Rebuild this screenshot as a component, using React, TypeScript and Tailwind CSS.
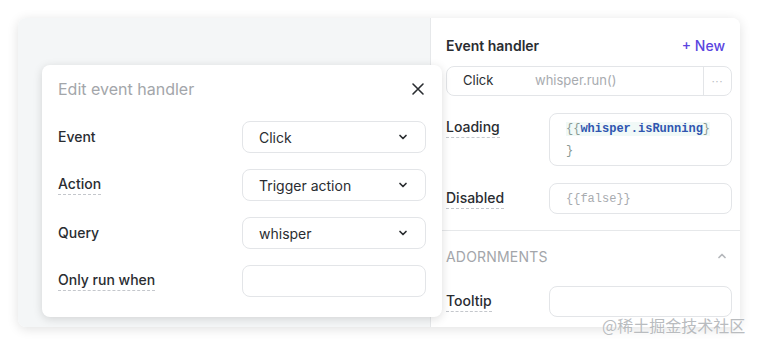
import React from 'react';

const font = { fontFamily: 'Inter, "Noto Sans", sans-serif' };
const mono = { fontFamily: '"Liberation Mono", "Courier New", monospace' };

const Chevron = ({ up = false }: { up?: boolean }) => (
  <svg width="12" height="12" viewBox="0 0 12 12" className={up ? 'rotate-180' : ''}>
    <path d="M3 4.5 L6 7.5 L9 4.5" fill="none" stroke="currentColor" strokeWidth="1.7" strokeLinecap="round" strokeLinejoin="round" />
  </svg>
);

const Label = ({ text, dashed = false }: { text: string; dashed?: boolean }) => (
  <span
    className={`inline-block leading-[18px] text-[14px] font-medium text-[#2a2d31] ${dashed ? 'border-b border-dashed border-[#c4c7cc] pb-[1px]' : ''}`}
  >
    {text}
  </span>
);

const SelectRow = ({ label, value, dashed, empty }: { label: string; value?: string; dashed?: boolean; empty?: boolean }) => (
  <div className="flex items-center h-[32px]">
    <div className="w-[184px] flex">
      <Label text={label} dashed={dashed} />
    </div>
    <div className="w-[184px] h-[32px] rounded-lg border border-[#e3e5e8] flex items-center justify-between px-[16px] text-[14px] text-[#2a2d31]">
      <span>{value}</span>
      {!empty && <span className="text-[#2a2d31]"><Chevron /></span>}
    </div>
  </div>
);

export default function App() {
  return (
    <div className="relative w-[758px] h-[346px] bg-white overflow-hidden" style={font}>
      {/* Card */}
      <div className="absolute left-[18px] top-[18px] w-[722px] h-[309px] rounded-lg overflow-hidden shadow-[0_2px_12px_rgba(0,0,0,0.12)] flex">
        <div className="w-[412px] h-full bg-[#f4f6f7]" />
        <div className="flex-1 bg-white border-l border-[#e6e8ea] flex flex-col">
          <div className="pl-[15px] pr-[8px]">
            <div className="flex items-center justify-between h-[48px] pt-[6px] pr-[7px]">
              <span className="text-[14px] font-semibold text-[#2a2d31]">Event handler</span>
              <span className="text-[14px] font-medium text-[#5a45e0]">+ New</span>
            </div>
            <div className="h-[30px] rounded-lg border border-[#e3e5e8] flex items-center text-[13px]">
              <span className="pl-[16px] w-[88px] text-[#2a2d31]">Click</span>
              <span className="flex-1 text-[#a8abaf]">whisper.run()</span>
              <span className="w-[28px] h-full border-l border-[#e3e5e8] flex items-center justify-center text-[#b5b8bc] text-[10px] tracking-[1px]">···</span>
            </div>
            <div className="flex mt-[17px]">
              <div className="w-[103px] pt-[5px] flex items-start"><Label text="Loading" dashed /></div>
              <div className="flex-1 h-[53px] rounded-lg border border-[#e3e5e8] pl-[16px] pt-[4px] text-[12px] leading-[22px]" style={mono}>
                <div>
                  <span className="bg-[#f1f9f7] text-[#8a9a94]">
                    {'{{'}<span className="text-[#2f56b0] font-semibold">whisper.isRunning</span>{'}'}
                  </span>
                </div>
                <div className="text-[#8a9a94]">{'}'}</div>
              </div>
            </div>
            <div className="flex items-center mt-[17px]">
              <div className="w-[103px] flex"><Label text="Disabled" dashed /></div>
              <div className="flex-1 h-[31px] rounded-lg border border-[#e3e5e8] pl-[16px] flex items-center text-[12px] text-[#a8abaf]" style={mono}>
                {'{{false}}'}
              </div>
            </div>
          </div>
          <div className="border-t border-[#e6e8ea] mt-[16px]" />
          <div className="pl-[15px] pr-[8px]">
            <div className="flex items-center justify-between h-[48px] pt-[2px] pr-[4px]">
              <span className="text-[14px] text-[#a3a6aa] tracking-[0.2px]">ADORNMENTS</span>
              <span className="text-[#b5b8bc]"><Chevron up /></span>
            </div>
            <div className="flex items-center mt-[7px]">
              <div className="w-[103px] flex"><Label text="Tooltip" dashed /></div>
              <div className="flex-1 h-[31px] rounded-lg border border-[#e3e5e8]" />
            </div>
          </div>
        </div>
      </div>

      {/* Modal */}
      <div className="absolute left-[42px] top-[65px] w-[400px] h-[252px] bg-white rounded-lg shadow-[0_2px_10px_rgba(0,0,0,0.14)] px-[16px]">
        <div className="flex items-center justify-between h-[48px]">
          <span className="text-[16px] text-[#a3a6aa]">Edit event handler</span>
          <svg width="14" height="14" viewBox="0 0 14 14" className="mr-[1px]">
            <path d="M2 2 L12 12 M12 2 L2 12" stroke="#2a2d31" strokeWidth="1.6" strokeLinecap="round" />
          </svg>
        </div>
        <div className="flex flex-col gap-[16px] mt-[8px]">
          <SelectRow label="Event" value="Click" />
          <SelectRow label="Action" value="Trigger action" dashed />
          <SelectRow label="Query" value="whisper" />
          <SelectRow label="Only run when" dashed empty />
        </div>
      </div>

      {/* Watermark */}
      <div
        className="absolute left-[602px] top-[313px] text-[16px] text-[#b9bcbf] [text-shadow:0_0_2px_white]"
        style={{ fontFamily: '"Noto Sans CJK SC", sans-serif' }}
      >
        @稀土掘金技术社区
      </div>
    </div>
  );
}
